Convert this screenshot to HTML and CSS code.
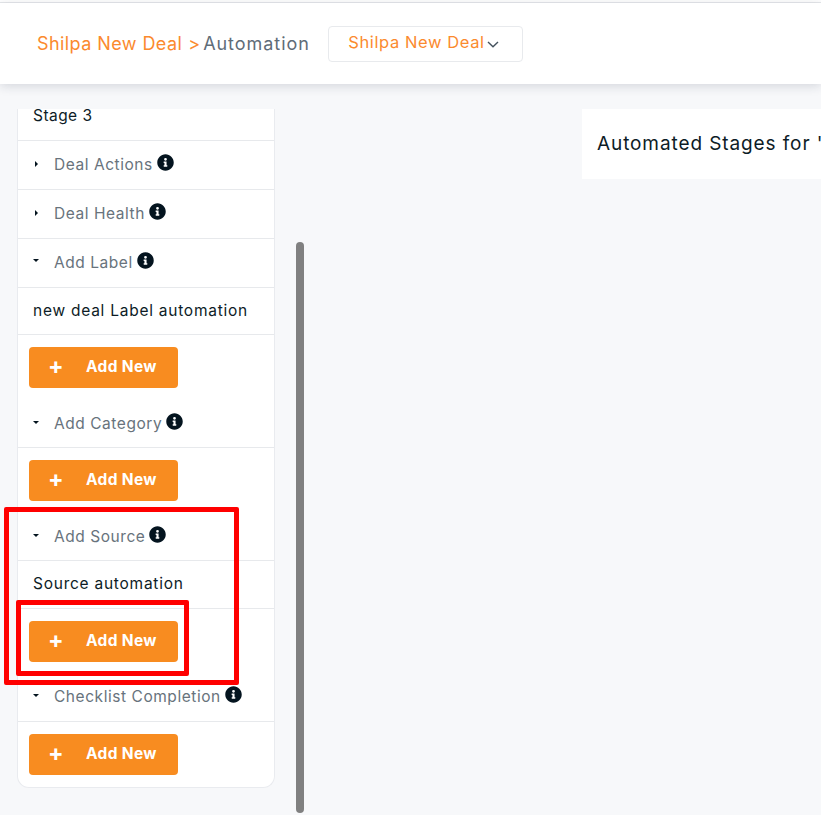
FILE: index.html
```html
<!DOCTYPE html>
<html lang="en">
<head>
<meta charset="utf-8">
<title>Automation</title>
<link rel="stylesheet" href="styles.css">
</head>
<body>
<div class="topstrip"></div>
<header class="topbar">
  <div class="crumbs"><span class="crumb-link">Shilpa New Deal</span><span class="crumb-sep">&gt;</span><span class="crumb-current">Automation</span></div>
  <button class="deal-select"><span>Shilpa New Deal</span>
    <svg class="chev" width="12" height="7" viewBox="0 0 12 7"><path d="M1 1l5 4.8L11 1" fill="none" stroke="#44525e" stroke-width="1.4"/></svg>
  </button>
</header>
<main class="content">
  <aside class="panel">
    <div class="row plain stage">Stage 3</div>
    <div class="row head"><span class="caret right"></span><span class="label">Deal Actions</span><svg class="info"><use href="#i"/></svg></div>
    <div class="row head"><span class="caret right"></span><span class="label">Deal Health</span><svg class="info"><use href="#i"/></svg></div>
    <div class="row head"><span class="caret down"></span><span class="label">Add Label</span><svg class="info"><use href="#i"/></svg></div>
    <div class="row plain item">new deal Label automation</div>
    <div class="add-wrap"><button class="add"><span class="plus">+</span>Add New</button></div>
    <div class="row head tight low"><span class="caret down"></span><span class="label">Add Category</span><svg class="info"><use href="#i"/></svg></div>
    <div class="add-wrap"><button class="add"><span class="plus">+</span>Add New</button></div>
    <div class="row head tight low"><span class="caret down"></span><span class="label">Add Source</span><svg class="info"><use href="#i"/></svg></div>
    <div class="row plain item tall">Source automation</div>
    <div class="add-wrap"><button class="add"><span class="plus">+</span>Add New</button></div>
    <div class="row head tight"><span class="caret down"></span><span class="label">Checklist Completion</span><svg class="info"><use href="#i"/></svg></div>
    <div class="add-wrap"><button class="add"><span class="plus">+</span>Add New</button></div>
  </aside>
  <div class="scrollbar"></div>
  <section class="card">Automated Stages for "Shilpa New Deal"</section>
</main>
<div class="mark mark-outer"></div>
<div class="mark mark-inner"></div>
<svg width="0" height="0" class="defs"><symbol id="i" viewBox="0 0 512 512"><path fill="#04141f" d="M256 8C119 8 8 119 8 256s111 248 248 248 248-111 248-248S393 8 256 8zm0 110a42 42 0 1 1 0 84 42 42 0 0 1 0-84zm56 254c0 7-5 12-12 12h-88c-7 0-12-5-12-12v-24c0-7 5-12 12-12h12v-64h-12c-7 0-12-5-12-12v-24c0-7 5-12 12-12h64c7 0 12 5 12 12v100h12c7 0 12 5 12 12z"/></symbol></svg>
</body>
</html>
```
FILE: styles.css
```css
* { box-sizing: border-box; }
html, body { margin: 0; height: 100%; }
body {
  background: #f7f8fa;
  font-family: "Inter", "Open Sans", sans-serif;
  overflow: hidden;
  position: relative;
  color: #04141f;
}
.defs { position: absolute; }
.topstrip { height: 3px; background: #fff; border-bottom: 1px solid #e6e8eb; }
.topbar {
  height: 81px;
  background: #fff;
  box-shadow: 0 2px 10px rgba(30, 40, 60, .16);
  display: flex;
  align-items: center;
  padding: 0 0 0 37px;
  position: relative;
}
.crumbs { font-size: 18px; width: 291px; white-space: nowrap; display: flex; align-items: center; }
.crumb-link { color: #fb8a2e; letter-spacing: .42px; }
.crumb-sep { color: #fb8a2e; margin: 0 3px 0 6px; }
.crumb-current { color: #5f6c78; letter-spacing: .95px; }
.deal-select {
  width: 195px;
  height: 36px;
  background: #fff;
  border: 1px solid #e8eaed;
  border-radius: 4px;
  display: flex;
  align-items: center;
  justify-content: center;
  gap: 2px;
  font: inherit;
  font-size: 16.5px;
  letter-spacing: .6px;
  color: #fb8a2e;
  padding: 0 4px 3px 0;
}
.chev { margin-top: 5px; }
.content { display: flex; align-items: flex-start; padding: 25px 0 0 17px; }
.panel {
  width: 258px;
  flex: none;
  background: #fff;
  border: 1px solid #e9ebef;
  border-top: 0;
  border-radius: 0 0 12px 12px;
}
.row {
  border-bottom: 1px solid #e7e9ec;
  display: flex;
  align-items: center;
  padding-left: 15px;
  white-space: nowrap;
}
.plain { font-size: 15.5px; letter-spacing: .75px; color: #0d1c26; }
.stage { height: 32px; padding-bottom: 22px; padding-top: 4px; letter-spacing: .45px; }
.item { height: 47px; padding-bottom: 1px; }
.item.tall { height: 48px; padding-bottom: 2px; }
.head { height: 49px; padding-bottom: 2px; }
.head.tight { height: 48px; }
.head.low { padding-bottom: 0; }
.caret { width: 0; height: 0; flex: none; }
.caret.right { border-left: 3px solid #04141f; border-top: 3px solid transparent; border-bottom: 3px solid transparent; margin-left: 2px; margin-right: 16px; }
.caret.down { border-top: 3px solid #04141f; border-left: 3px solid transparent; border-right: 3px solid transparent; margin-right: 15px; margin-top: -3px; }
.label { font-size: 15.5px; letter-spacing: .55px; color: #68737c; }
.info { width: 17px; height: 17px; margin-left: 4px; margin-top: -4px; flex: none; }
.add-wrap { padding: 12px 0 12px 11px; height: 65px; }
.add {
  width: 149px;
  height: 41px;
  background: #f88c20;
  border: 0;
  border-radius: 4px;
  color: #fff;
  font: inherit;
  font-size: 15.5px;
  letter-spacing: .35px;
  font-weight: 700;
  display: flex;
  align-items: center;
  padding: 0 0 3px 19px;
}
.plus { width: 38px; text-align: left; font-size: 23px; line-height: 1; }
.scrollbar {
  width: 8px;
  height: 571px;
  flex: none;
  margin: 133px 0 0 21px;
  background: #808080;
  border-radius: 4px;
}
.card {
  width: 420px;
  height: 70px;
  flex: none;
  margin-left: 278px;
  background: #fff;
  padding: 0 0 2px 15px;
  display: flex;
  align-items: center;
  white-space: nowrap;
  font-size: 19px;
  letter-spacing: .9px;
  color: #0d1c26;
}
.mark { position: absolute; border: 5px solid #ff0000; border-radius: 2px; }
.mark-outer { left: 4px; top: 507px; width: 235px; height: 178px; }
.mark-inner { left: 16px; top: 600px; width: 173px; height: 76px; }
```
